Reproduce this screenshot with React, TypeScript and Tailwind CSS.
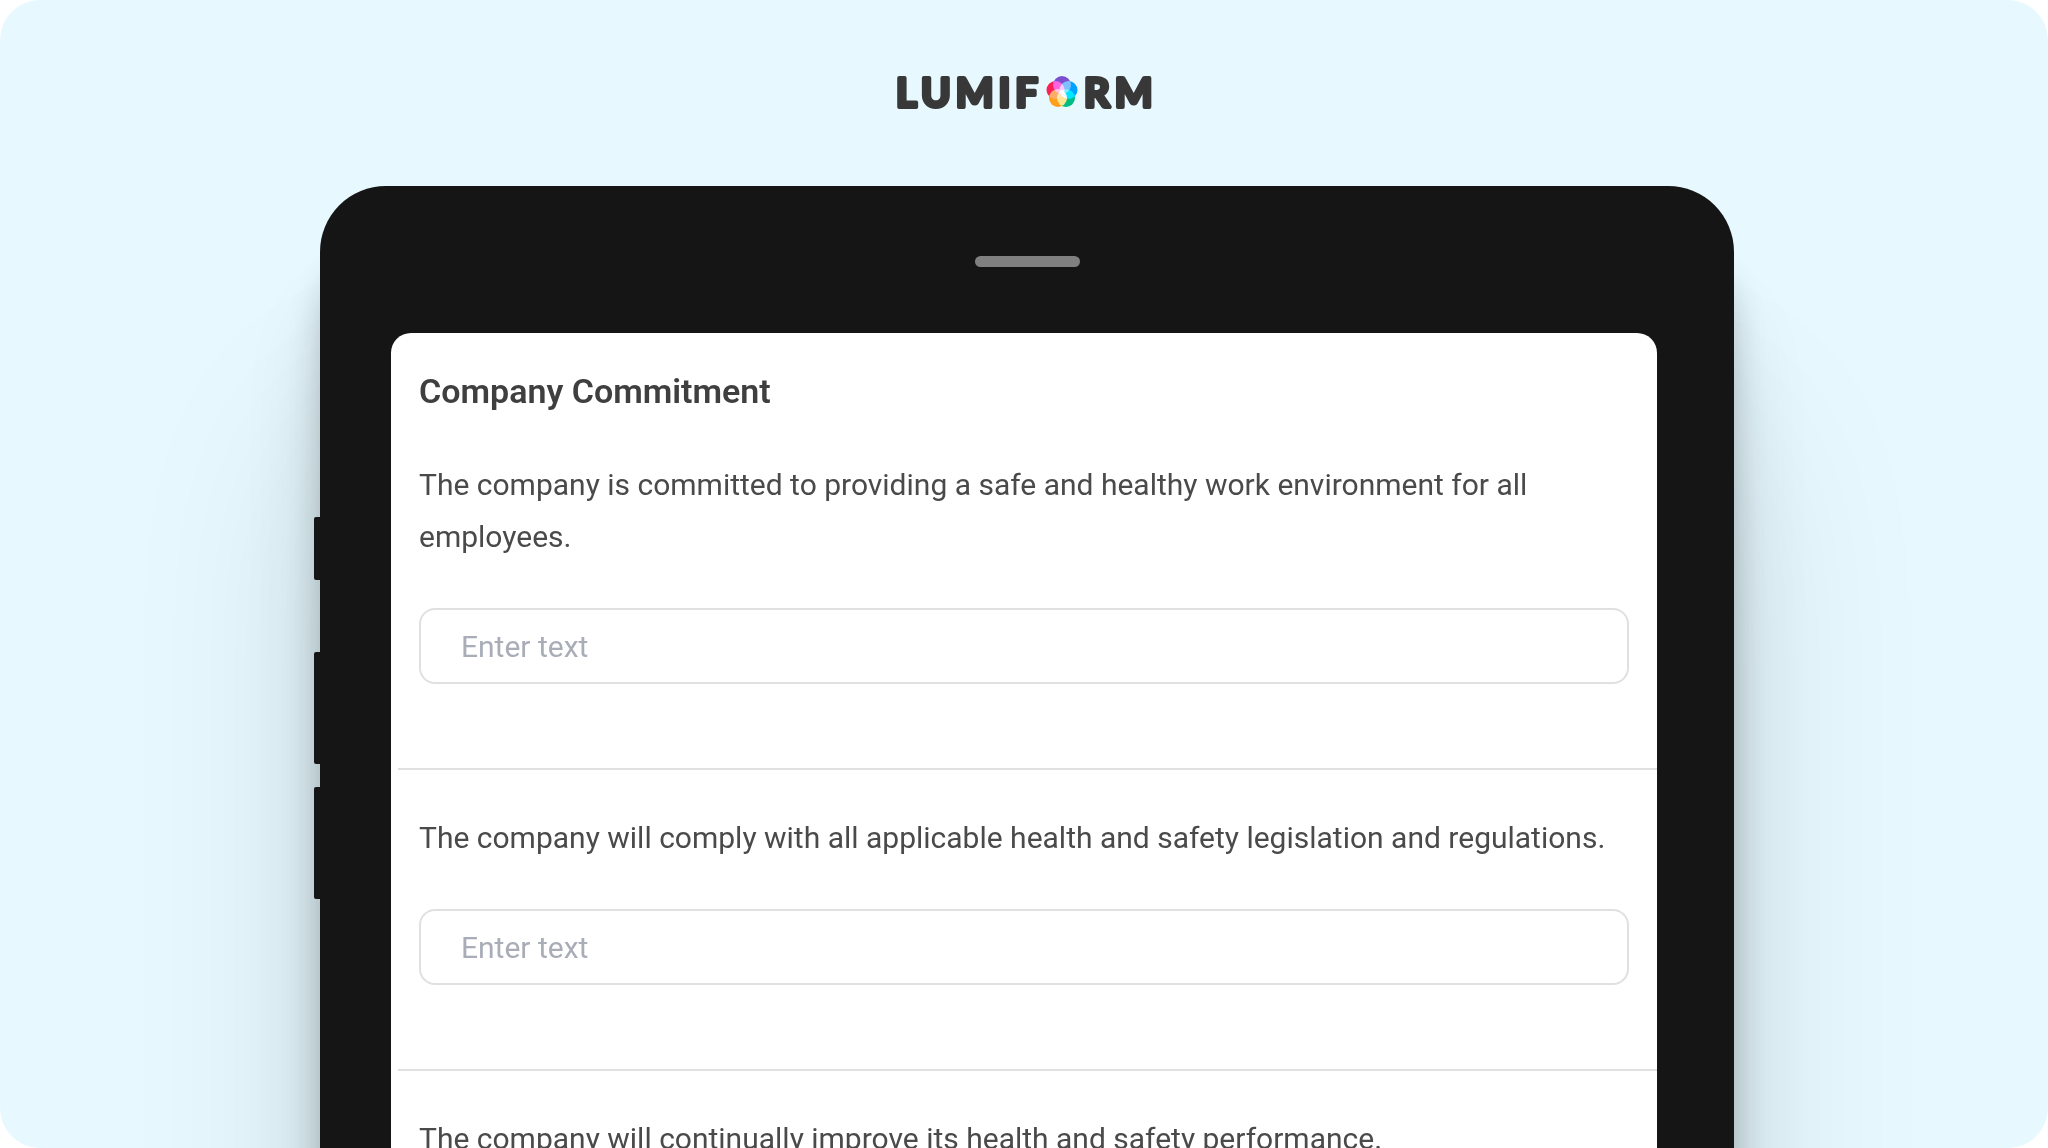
const questions = [
  "The company is committed to providing a safe and healthy work environment for all employees.",
  "The company will comply with all applicable health and safety legislation and regulations.",
  "The company will continually improve its health and safety performance.",
];

const petals = [
  { cx: 16, cy: 9, fill: "#7d4fcf" },
  { cx: 22.5, cy: 14, fill: "#00a2ff" },
  { cx: 20, cy: 22, fill: "#00bd84" },
  { cx: 12, cy: 22, fill: "#ff9f1c" },
  { cx: 9.5, cy: 14, fill: "#fb1f55" },
];

function Logo() {
  return (
    <svg role="img" aria-label="Lumiform" viewBox="0 0 270 56" className="h-14 w-[270px] overflow-visible">
      <g
        className="font-['Lato'] text-[40px] font-bold tracking-[5px]"
        fill="#383838"
        stroke="#383838"
        strokeWidth="4"
        strokeLinejoin="round"
      >
        <text x="7" y="43">LUMIF</text>
        <text x="195" y="43">RM</text>
      </g>
      <g transform="translate(157 12)" className="isolate">
        {petals.map((p) => (
          <circle key={p.fill} cx={p.cx} cy={p.cy} r="9" fill={p.fill} className="mix-blend-screen" />
        ))}
      </g>
    </svg>
  );
}

function Question({ id, label }: { id: string; label: string }) {
  return (
    <div className="px-7">
      <label htmlFor={id} className="block text-[30px] leading-[52px] text-[#4a4a4a]">
        {label}
      </label>
      <input
        id={id}
        type="text"
        placeholder="Enter text"
        className="mt-[45px] block h-[76px] w-full rounded-[16px] border-2 border-[#e0e0e0] bg-white px-10 text-[30px] text-[#4a4a4a] placeholder:text-[#a9adb8]"
      />
    </div>
  );
}

export default function App() {
  return (
    <main className="flex h-screen flex-col overflow-hidden rounded-[40px] bg-[#e7f9ff] font-['Roboto',sans-serif]">
      <header className="flex shrink-0 justify-center pt-16 pb-[66px]">
        <Logo />
      </header>
      <div className="flex shrink-0 items-start pr-[314px] pl-[314px]">
        <div className="z-10 mt-[331px] flex w-1.5 shrink-0 flex-col">
          <span className="h-[63px] rounded-l-xs bg-[#151515]" />
          <span className="mt-[72px] h-28 rounded-l-xs bg-[#151515]" />
          <span className="mt-[23px] h-28 rounded-l-xs bg-[#151515]" />
        </div>
        <div className="min-w-0 flex-1 rounded-[66px] bg-[#151515] pt-[70px] pb-20 shadow-[0_240px_200px_rgba(0,0,0,0.12),0_120px_80px_rgba(0,0,0,0.12),0_70px_32px_rgba(0,0,0,0.18)]">
          <div className="mx-auto h-[11px] w-[105px] rounded-full bg-[#808080]" />
          <section className="mt-[66px] mr-[77px] ml-[71px] rounded-[20px] bg-white pt-8 pb-20">
            <h1 className="px-7 text-[34px] leading-[52px] font-semibold text-[#3f3f3f]">Company Commitment</h1>
            <div className="mt-[42px]">
              {questions.map((label, i) => (
                <div key={label}>
                  {i > 0 && <hr className="mt-[84px] mb-[42px] ml-[7px] border-t-2 border-[#e0e0e0]" />}
                  <Question id={`question-${i}`} label={label} />
                </div>
              ))}
            </div>
          </section>
        </div>
      </div>
    </main>
  );
}
